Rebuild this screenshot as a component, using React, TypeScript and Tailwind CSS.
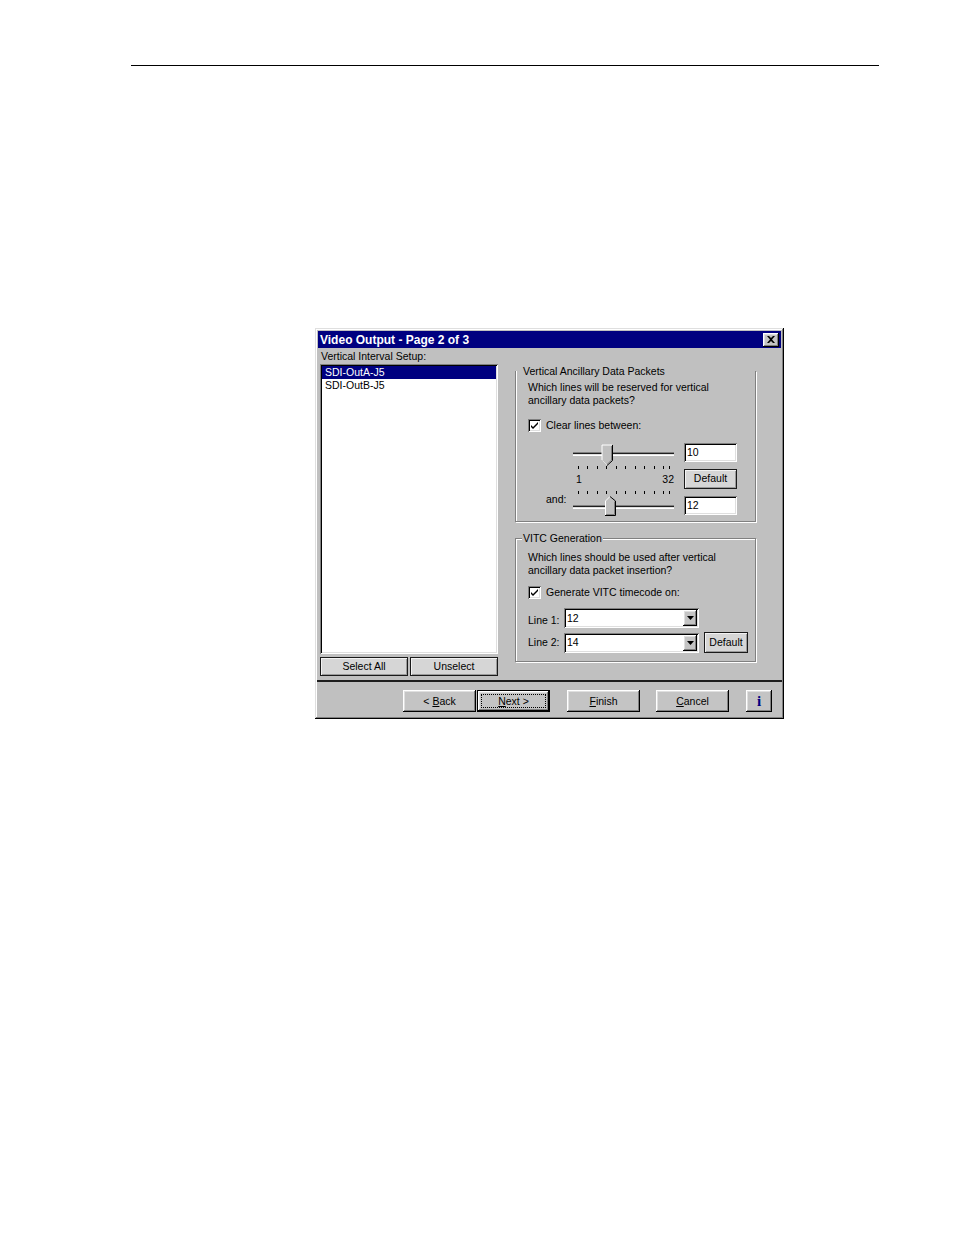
import React from "react";

const sunken =
  "bg-white shadow-[inset_1px_1px_#808080,inset_-1px_-1px_#ffffff,inset_2px_2px_#000000,inset_-2px_-2px_#dfdfdf]";
const raised =
  "bg-[#c4c4c4] shadow-[inset_-1px_-1px_#000000,inset_1px_1px_#ffffff,inset_-2px_-2px_#808080,inset_2px_2px_#dfdfdf]";
const flatBtn =
  "border border-[#1a1a1a] bg-[#d6d6d6] shadow-[inset_1px_1px_#f2f2f2,inset_-1px_-1px_#9a9a9a] flex items-center justify-center";

function CheckBox() {
  return (
    <div className={`w-[13px] h-[13px] shrink-0 ${sunken} flex items-center justify-center`}>
      <svg width="9" height="9" viewBox="0 0 9 9">
        <path d="M1 4 L3 6 L8 1 L8 3 L3 8 L1 6 Z" fill="#000" />
      </svg>
    </div>
  );
}

function SliderDown() {
  return (
    <svg width="101" height="22" viewBox="0 0 101 22" className="block overflow-visible">
      <rect x="0" y="9" width="101" height="1" fill="#808080" />
      <rect x="0" y="10" width="101" height="1" fill="#202020" />
      <rect x="0" y="11" width="101" height="1" fill="#dfdfdf" />
      <rect x="0" y="12" width="101" height="1" fill="#ffffff" />
      <polygon points="29,2 39,2 39,17 34,22 29,17" fill="#c0c0c0" />
      <polyline points="29,17 29,2 39,2" fill="none" stroke="#ffffff" strokeWidth="1" />
      <polyline points="39.5,2 39.5,17.5 34,22.5" fill="none" stroke="#000" strokeWidth="1" />
      <polyline points="38.5,3 38.5,17 34,21.5" fill="none" stroke="#808080" strokeWidth="1" />
      <polyline points="29.5,17.5 34,22" fill="none" stroke="#dfdfdf" strokeWidth="1" />
    </svg>
  );
}

function SliderUp() {
  return (
    <svg width="101" height="20" viewBox="0 0 101 20" className="block overflow-visible">
      <rect x="0" y="9" width="101" height="1" fill="#808080" />
      <rect x="0" y="10" width="101" height="1" fill="#202020" />
      <rect x="0" y="11" width="101" height="1" fill="#dfdfdf" />
      <rect x="0" y="12" width="101" height="1" fill="#ffffff" />
      <polygon points="37,0 42,5 42,19 32,19 32,5" fill="#c0c0c0" />
      <polyline points="32.5,19 32.5,5 37,0.5" fill="none" stroke="#ffffff" strokeWidth="1" />
      <polyline points="37,0.5 42.5,5 42.5,19.5 32,19.5" fill="none" stroke="#000" strokeWidth="1" />
      <polyline points="41.5,5.5 41.5,18.5 33,18.5" fill="none" stroke="#808080" strokeWidth="1" />
    </svg>
  );
}

const tickXs = [5, 14, 24, 33, 43, 52, 62, 71, 81, 90, 96];

function Ticks({ y, h }: { y: number; h: number }) {
  return (
    <svg width="101" height={h} viewBox={`0 0 101 ${h}`} className="block">
      {tickXs.map((x) => (
        <rect key={x} x={x} y={y} width="1" height="3" fill="#000" />
      ))}
    </svg>
  );
}

function Combo({ value }: { value: string }) {
  return (
    <div className={`w-[135px] h-[20px] ${sunken} flex items-center justify-between pl-[3px] pr-[2px]`}>
      <span className="leading-none">{value}</span>
      <div className={`w-[14px] h-[16px] ${raised} flex items-center justify-center`}>
        <svg width="7" height="4" viewBox="0 0 7 4">
          <polygon points="0,0 7,0 3.5,4" fill="#000" />
        </svg>
      </div>
    </div>
  );
}

export default function App() {
  return (
    <div className="w-[954px] h-[1235px] bg-white pt-[65px] font-['Liberation_Sans',Arial,sans-serif] text-black">
      <div className="ml-[131px] w-[748px] h-px bg-black" />
      <div className="mt-[262px] ml-[315px] w-[469px] h-[391px] bg-[#c0c0c0] p-[3px] flex flex-col shadow-[inset_-1px_-1px_#000000,inset_1px_1px_#dfdfdf,inset_-2px_-2px_#808080,inset_2px_2px_#ffffff] text-[10.5px]">
        {/* Title bar */}
        <div className="h-[17px] bg-[#000080] flex items-center justify-between pl-[2px] pr-[2px]">
          <span className="text-white font-bold text-[12px] leading-none">Video Output - Page 2 of 3</span>
          <div className={`w-[16px] h-[14px] ${raised} flex items-center justify-center`}>
            <svg width="8" height="7" viewBox="0 0 8 7">
              <path d="M0 0 L2 0 L4 2 L6 0 L8 0 L5 3.5 L8 7 L6 7 L4 5 L2 7 L0 7 L3 3.5 Z" fill="#000" />
            </svg>
          </div>
        </div>

        {/* Body */}
        <div className="h-[332px] flex">
          {/* Left column */}
          <div className="ml-[2px] w-[178px] flex flex-col">
            <div className="h-[16px] leading-[16px] pl-[1px]">Vertical Interval Setup:</div>
            <div className={`h-[290px] ${sunken} p-[2px]`}>
              <div className="h-[13px] leading-[13px] bg-[#000080] text-white pl-[3px]">SDI-OutA-J5</div>
              <div className="h-[13px] leading-[13px] pl-[3px]">SDI-OutB-J5</div>
            </div>
            <div className="mt-[3px] flex gap-[2px]">
              <div className={`w-[88px] h-[19px] ${flatBtn}`}>Select All</div>
              <div className={`w-[88px] h-[19px] ${flatBtn}`}>Unselect</div>
            </div>
          </div>

          {/* Right column */}
          <div className="ml-[17px] w-[241px] flex flex-col">
            {/* Group 1 */}
            <div className="relative mt-[23px] h-[151px] border border-t-0 border-[#808080] shadow-[inset_1px_0_#ffffff,1px_1px_#ffffff] pl-[12px]">
              <span className="absolute -top-[7px] left-[6px] px-[1px] leading-[14px] bg-[#c0c0c0]">
                Vertical Ancillary Data Packets
              </span>
              <div className="mt-[10px] leading-[13px]">
                <div>Which lines will be reserved for vertical</div>
                <div>ancillary data packets?</div>
              </div>
              <div className="mt-[12px] flex items-center gap-[5px] h-[13px]">
                <CheckBox />
                <span className="leading-none">Clear lines between:</span>
              </div>
              <div className="mt-[11px] ml-[18px] flex">
                <div className="w-[27px] flex flex-col">
                  <div className="h-[20px]" />
                  <div className="h-[33px]" />
                  <div className="h-[20px] -mt-[3px] leading-[13px]">and:</div>
                </div>
                <div className="w-[101px] flex flex-col">
                  <div className="h-[20px]">
                    <SliderDown />
                  </div>
                  <div className="h-[33px] flex flex-col">
                    <Ticks y={3} h={6} />
                    <div className="mt-[4px] h-[13px] leading-[13px] flex justify-between pl-[3px]">
                      <span>1</span>
                      <span>32</span>
                    </div>
                    <Ticks y={5} h={10} />
                  </div>
                  <div className="h-[20px]">
                    <SliderUp />
                  </div>
                </div>
                <div className="ml-[10px] w-[53px] flex flex-col">
                  <div className={`h-[19px] ${sunken} pl-[3px] flex items-center leading-none`}>10</div>
                  <div className={`mt-[7px] h-[20px] ${flatBtn}`}>Default</div>
                  <div className={`mt-[7px] h-[19px] ${sunken} pl-[3px] flex items-center leading-none`}>12</div>
                </div>
              </div>
            </div>

            {/* Group 2 */}
            <div className="relative mt-[16px] h-[124px] border border-[#808080] shadow-[inset_1px_1px_#ffffff,1px_1px_#ffffff] pl-[12px]">
              <span className="absolute -top-[8px] left-[6px] px-[1px] leading-[14px] bg-[#c0c0c0]">VITC Generation</span>
              <div className="mt-[12px] leading-[13px]">
                <div>Which lines should be used after vertical</div>
                <div>ancillary data packet insertion?</div>
              </div>
              <div className="mt-[9px] flex items-center gap-[5px] h-[13px]">
                <CheckBox />
                <span className="leading-none">Generate VITC timecode on:</span>
              </div>
              <div className="mt-[9px] flex items-end">
                <span className="w-[36px] leading-[13px] pb-[1px]">Line 1:</span>
                <Combo value="12" />
              </div>
              <div className="mt-[4px] flex items-end">
                <span className="w-[36px] leading-[13px] pb-[4px]">Line 2:</span>
                <div className="flex items-center">
                  <Combo value="14" />
                  <div className={`ml-[5px] w-[44px] h-[21px] ${flatBtn}`}>Default</div>
                </div>
              </div>
            </div>
          </div>
        </div>

        {/* Separator */}
        <div className="-mx-[1px] h-[2px] bg-[#1e1e1e]" />

        {/* Bottom buttons */}
        <div className="mt-[8px] flex">
          <div className={`ml-[85px] w-[73px] h-[22px] ${raised} flex items-center justify-center leading-none`}>
            &lt; <span className="underline ml-[3px]">B</span>ack
          </div>
          <div className="relative ml-[1px] w-[73px] h-[22px] border border-black">
            <div className={`w-full h-full ${raised} flex items-center justify-center leading-none`}>
              <span className="underline">N</span>ext &gt;
            </div>
            <div className="absolute inset-[3px] border border-dotted border-black" />
          </div>
          <div className={`ml-[17px] w-[73px] h-[22px] ${raised} flex items-center justify-center leading-none`}>
            <span className="underline">F</span>inish
          </div>
          <div className={`ml-[16px] w-[73px] h-[22px] ${raised} flex items-center justify-center leading-none`}>
            <span className="underline">C</span>ancel
          </div>
          <div className={`ml-[17px] w-[26px] h-[22px] ${raised} flex items-center justify-center`}>
            <span className="font-['Liberation_Serif',serif] font-bold text-[15px] leading-none text-[#000080]">i</span>
          </div>
        </div>
      </div>
    </div>
  );
}
